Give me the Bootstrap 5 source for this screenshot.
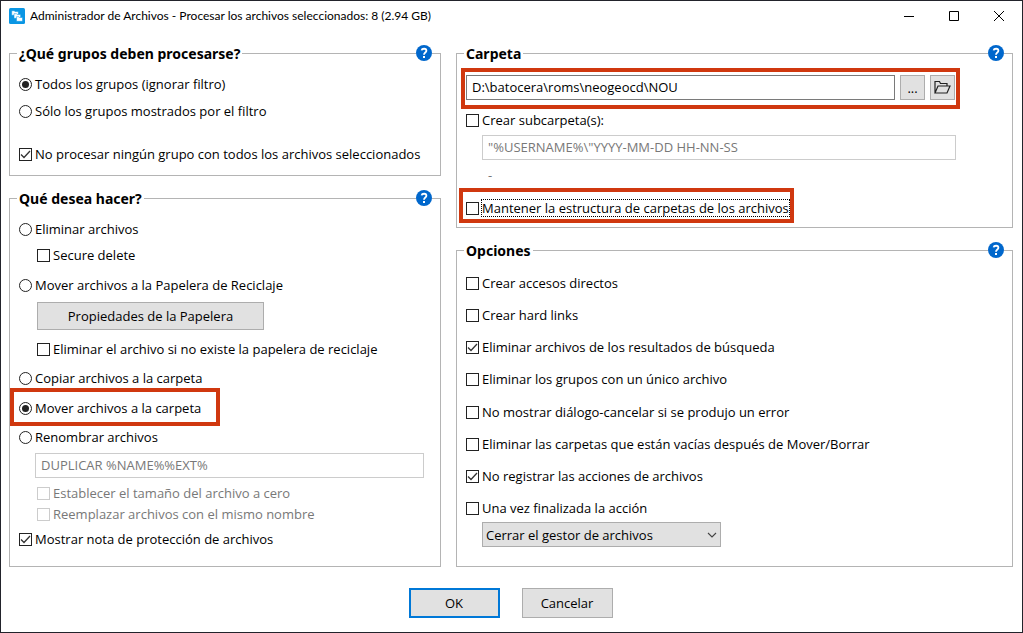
<!DOCTYPE html>
<html lang="es">
<head>
<meta charset="utf-8">
<meta name="viewport" content="width=device-width, initial-scale=1">
<title>Administrador de Archivos</title>
<link href="https://cdn.jsdelivr.net/npm/bootstrap@5.3.0/dist/css/bootstrap.min.css" rel="stylesheet">
<style>
  body { font-family: "Open Sans", "Noto Sans", sans-serif; font-size: 13px; line-height: 20px; color: #000; background: #fff; }
  .window { border: 1px solid #22232b; min-height: 100vh; }
  .titlebar { height: 29px; padding: 0 1px 0 8px; }
  .titlebar h1 { font-family: Lato, "Noto Sans", sans-serif; font-size: 12px; line-height: 20px; margin: 0 auto 0 5px; font-weight: 400; }
  .caption-btn { width: 45px; height: 29px; border: 0; background: none; padding: 0; }
  .panes { display: grid; grid-template-columns: 432fr 557fr; column-gap: 15px; padding: 12px 9px 0 8px; }
  .pane { row-gap: 11px; }
  .group { position: relative; border: 1px solid #b4b4b4; padding: 10px 16px 11px 9px; }
  .group legend { float: none; width: auto; margin: 0 0 0 -2px; padding: 2px 2px 0; font-family: "Noto Sans", sans-serif; font-size: 14px; line-height: 20px; font-weight: 700; }
  .group .help { position: absolute; right: 8px; top: -19px; width: 16px; height: 16px; padding: 0; border: 0; background: #fff; line-height: 0; }
  .group.folder { padding-bottom: 9px; }
  .group.actions-list { padding-bottom: 17px; }
  .group.options { padding-top: 12px; }
  .opt { height: 20px; gap: 3px; width: fit-content; position: relative; white-space: nowrap; }
  .indent { margin-left: 18px; }
  .field-indent { margin-left: 16px; }
  .opt .form-check-input { margin: 0; width: 13px; height: 13px; border: 1px solid #222; background-color: #fff; flex: none; box-shadow: none; }
  .opt .form-check-input[type=checkbox] { border-radius: 0; }
  .opt .form-check-input:checked { background-color: #fff; }
  .opt .form-check-input[type=checkbox]:checked { background-size: 11px 11px; background-image: url("data:image/svg+xml,%3csvg xmlns='http://www.w3.org/2000/svg' viewBox='0 0 11 11'%3e%3cpath fill='none' stroke='%23333' stroke-width='1.3' d='M1 5.5l3 3L10 2'/%3e%3c/svg%3e"); }
  .opt .form-check-input[type=radio]:checked { background-size: 11px 11px; background-image: url("data:image/svg+xml,%3csvg xmlns='http://www.w3.org/2000/svg' viewBox='0 0 11 11'%3e%3ccircle cx='5.5' cy='5.5' r='3.5' fill='%23222'/%3e%3c/svg%3e"); }
  .opt .form-check-input:disabled { border-color: #ccc; opacity: 1; }
  .opt .form-check-input:disabled ~ label { color: #787878; opacity: 1; }
  .field { height: 25px; border-radius: 0; border: 1px solid #7a7a7a; padding: 0 5px 2px; font-size: 13px; line-height: 20px; color: #000; min-width: 0; }
  .field:disabled { border-color: #ccc; background: #fff; color: #787878; }
  .push { height: 28px; border-radius: 0; border: 1px solid #adadad; background: #e1e1e1; color: #000; padding: 0; font-size: 13px; line-height: 20px; }
  .push.recycle { width: 227px; }
  .push.tool { width: 25px; height: 25px; flex: none; }
  .push.action { width: 91px; height: 30px; }
  .push.default { border: 2px solid #0078d7; }
  .combo { width: 239px; height: 25px; border-radius: 0; border: 1px solid #adadad; padding: 0 24px 0 3px; font-size: 13px; line-height: 20px; color: #000; background-color: #e1e1e1; background-position: right 3px center; background-size: 10px 10px; background-image: url("data:image/svg+xml,%3csvg xmlns='http://www.w3.org/2000/svg' viewBox='0 0 10 10'%3e%3cpath fill='none' stroke='%23444' stroke-width='1.1' d='M1 3l4 4 4-4'/%3e%3c/svg%3e"); }
  .folder-row { gap: 5px; margin: 1px 41px 0 0; }
  .sub-row { margin-right: 40px; }
  .marked { position: relative; }
  .marked::after { content: ""; position: absolute; border: 4px solid #d0380f; pointer-events: none; inset: -7px -5px -9px -5px; }
  .opt.marked::after { inset: -10px -19px -8px -9px; }
  .opt.marked.keep::after { inset: -10px -5px -5px -7px; }
  .dotted-focus { outline: 1px dotted #000; line-height: 16px; }
  .note { height: 20px; color: #787878; padding-left: 22px; }
  .mt-1px { margin-top: 1px; } .mt-4px { margin-top: 4px; } .mt-5px { margin-top: 5px; } .mt-6px { margin-top: 6px; } .mt-7px { margin-top: 7px; }
  .mt-9px { margin-top: 9px; } .mt-10px { margin-top: 10px; } .mt-12px { margin-top: 12px; } .mt-13px { margin-top: 13px; } .mt-23px { margin-top: 23px; }
  .actions { gap: 22px; padding: 21px 2px 14px 0; }
</style>
</head>
<body>
<svg class="d-none">
  <symbol id="help" viewBox="0 0 16 16"><circle cx="8" cy="8" r="8" fill="#0067cc"/><path d="M5.600 5.400C6 3.200 10.400 3.100 10.400 5.700C10.400 7.500 8 7.500 8 9.700" fill="none" stroke="#fff" stroke-width="1.800"/><path d="M7 11h2v2H7z" fill="#fff"/></symbol>
</svg>
<main class="window d-flex flex-column">
  <header class="titlebar d-flex align-items-center">
    <svg width="16" height="16" viewBox="0 0 16 16" class="flex-shrink-0" aria-hidden="true"><rect width="16" height="16" rx="1.500" fill="#0a96e4"/><g fill="#fff" stroke="#0a96e4" stroke-width=".5"><path d="M2.700 2.700h2.600l.6.800h3.400v3.800H2.700z"/><path d="M5 5.700h2.600l.6.800h3.400v3.800H5z"/><path d="M7.500 8.700h2.300l.6.800h3.100v3.800h-6z"/></g></svg>
    <h1 class="text-truncate">Administrador de Archivos - Procesar los archivos seleccionados: 8 (2.94 GB)</h1>
    <button class="caption-btn" type="button" aria-label="Minimizar"><svg width="10" height="10" class="d-block mx-auto"><path d="M0 5.500h10" stroke="#000"/></svg></button>
    <button class="caption-btn" type="button" aria-label="Maximizar"><svg width="10" height="10" class="d-block mx-auto"><path d="M.5.500h9v9h-9z" fill="none" stroke="#000"/></svg></button>
    <button class="caption-btn" type="button" aria-label="Cerrar"><svg width="10" height="10" class="d-block mx-auto"><path d="M0 0l10 10M10 0L0 10" stroke="#000"/></svg></button>
  </header>

  <div class="panes">
    <div class="pane d-flex flex-column">
      <fieldset class="group">
        <legend>¿Qué grupos deben procesarse?</legend>
        <button class="help" type="button" aria-label="Ayuda"><svg width="16" height="16"><use href="#help"/></svg></button>
        <div class="opt d-flex align-items-center"><input class="form-check-input" type="radio" name="grupos" id="g1" checked><label for="g1">Todos los grupos (ignorar filtro)</label></div>
        <div class="opt d-flex align-items-center mt-7px"><input class="form-check-input" type="radio" name="grupos" id="g2"><label for="g2">Sólo los grupos mostrados por el filtro</label></div>
        <div class="opt d-flex align-items-center mt-23px"><input class="form-check-input" type="checkbox" id="g3" checked><label for="g3">No procesar ningún grupo con todos los archivos seleccionados</label></div>
      </fieldset>

      <fieldset class="group actions-list flex-grow-1">
        <legend>Qué desea hacer?</legend>
        <button class="help" type="button" aria-label="Ayuda"><svg width="16" height="16"><use href="#help"/></svg></button>
        <div class="opt d-flex align-items-center"><input class="form-check-input" type="radio" name="accion" id="a1"><label for="a1">Eliminar archivos</label></div>
        <div class="opt indent d-flex align-items-center mt-6px"><input class="form-check-input" type="checkbox" id="a2"><label for="a2">Secure delete</label></div>
        <div class="opt d-flex align-items-center mt-10px"><input class="form-check-input" type="radio" name="accion" id="a3"><label for="a3">Mover archivos a la Papelera de Reciclaje</label></div>
        <button class="btn push recycle indent d-block mt-7px" type="button">Propiedades de la Papelera</button>
        <div class="opt indent d-flex align-items-center mt-9px"><input class="form-check-input" type="checkbox" id="a4"><label for="a4">Eliminar el archivo si no existe la papelera de reciclaje</label></div>
        <div class="opt d-flex align-items-center mt-9px"><input class="form-check-input" type="radio" name="accion" id="a5"><label for="a5">Copiar archivos a la carpeta</label></div>
        <div class="opt marked d-flex align-items-center mt-10px"><input class="form-check-input" type="radio" name="accion" id="a6" checked><label for="a6">Mover archivos a la carpeta</label></div>
        <div class="opt d-flex align-items-center mt-9px"><input class="form-check-input" type="radio" name="accion" id="a7"><label for="a7">Renombrar archivos</label></div>
        <div class="field-indent mt-6px d-flex"><input class="form-control field" type="text" value="DUPLICAR %NAME%%EXT%" aria-label="Nuevo nombre" disabled></div>
        <div class="opt indent d-flex align-items-center mt-5px"><input class="form-check-input" type="checkbox" id="a8" disabled><label for="a8">Establecer el tamaño del archivo a cero</label></div>
        <div class="opt indent d-flex align-items-center mt-1px"><input class="form-check-input" type="checkbox" id="a9" disabled><label for="a9">Reemplazar archivos con el mismo nombre</label></div>
        <div class="opt d-flex align-items-center mt-5px"><input class="form-check-input" type="checkbox" id="a10" checked><label for="a10">Mostrar nota de protección de archivos</label></div>
      </fieldset>
    </div>

    <div class="pane d-flex flex-column">
      <fieldset class="group folder">
        <legend>Carpeta</legend>
        <button class="help" type="button" aria-label="Ayuda"><svg width="16" height="16"><use href="#help"/></svg></button>
        <div class="folder-row marked d-flex">
          <input class="form-control field" type="text" value="D:\batocera\roms\neogeocd\NOU" aria-label="Carpeta">
          <button class="btn push tool" type="button">...</button>
          <button class="btn push tool d-flex align-items-center justify-content-center" type="button" aria-label="Abrir carpeta"><svg width="17" height="15" viewBox="0 0 17 15" fill="none" stroke="#222" stroke-width="1.200"><path d="M1 13V1.500h4.500l1 2H13V6M1 13L4 6h12l-3 7z"/></svg></button>
        </div>
        <div class="opt d-flex align-items-center mt-10px"><input class="form-check-input" type="checkbox" id="c1"><label for="c1">Crear subcarpeta(s):</label></div>
        <div class="sub-row field-indent mt-5px d-flex"><input class="form-control field" type="text" value="&quot;%USERNAME%\&quot;YYYY-MM-DD HH-NN-SS" aria-label="Subcarpeta" disabled></div>
        <div class="note mt-5px">-</div>
        <div class="opt marked keep d-flex align-items-center mt-13px"><input class="form-check-input" type="checkbox" id="c2"><label class="dotted-focus" for="c2">Mantener la estructura de carpetas de los archivos</label></div>
      </fieldset>

      <fieldset class="group options flex-grow-1">
        <legend>Opciones</legend>
        <button class="help" type="button" aria-label="Ayuda"><svg width="16" height="16"><use href="#help"/></svg></button>
        <div class="opt d-flex align-items-center"><input class="form-check-input" type="checkbox" id="o1"><label for="o1">Crear accesos directos</label></div>
        <div class="opt d-flex align-items-center mt-12px"><input class="form-check-input" type="checkbox" id="o2"><label for="o2">Crear hard links</label></div>
        <div class="opt d-flex align-items-center mt-12px"><input class="form-check-input" type="checkbox" id="o3" checked><label for="o3">Eliminar archivos de los resultados de búsqueda</label></div>
        <div class="opt d-flex align-items-center mt-12px"><input class="form-check-input" type="checkbox" id="o4"><label for="o4">Eliminar los grupos con un único archivo</label></div>
        <div class="opt d-flex align-items-center mt-13px"><input class="form-check-input" type="checkbox" id="o5"><label for="o5">No mostrar diálogo-cancelar si se produjo un error</label></div>
        <div class="opt d-flex align-items-center mt-12px"><input class="form-check-input" type="checkbox" id="o6"><label for="o6">Eliminar las carpetas que están vacías después de Mover/Borrar</label></div>
        <div class="opt d-flex align-items-center mt-12px"><input class="form-check-input" type="checkbox" id="o7" checked><label for="o7">No registrar las acciones de archivos</label></div>
        <div class="opt d-flex align-items-center mt-12px"><input class="form-check-input" type="checkbox" id="o8"><label for="o8">Una vez finalizada la acción</label></div>
        <select class="form-select combo field-indent mt-4px" aria-label="Una vez finalizada la acción"><option>Cerrar el gestor de archivos</option></select>
      </fieldset>
    </div>
  </div>

  <footer class="actions d-flex justify-content-center">
    <button class="btn push action default" type="button">OK</button>
    <button class="btn push action" type="button">Cancelar</button>
  </footer>
</main>
<script src="https://cdn.jsdelivr.net/npm/bootstrap@5.3.0/dist/js/bootstrap.bundle.min.js"></script>
</body>
</html>
